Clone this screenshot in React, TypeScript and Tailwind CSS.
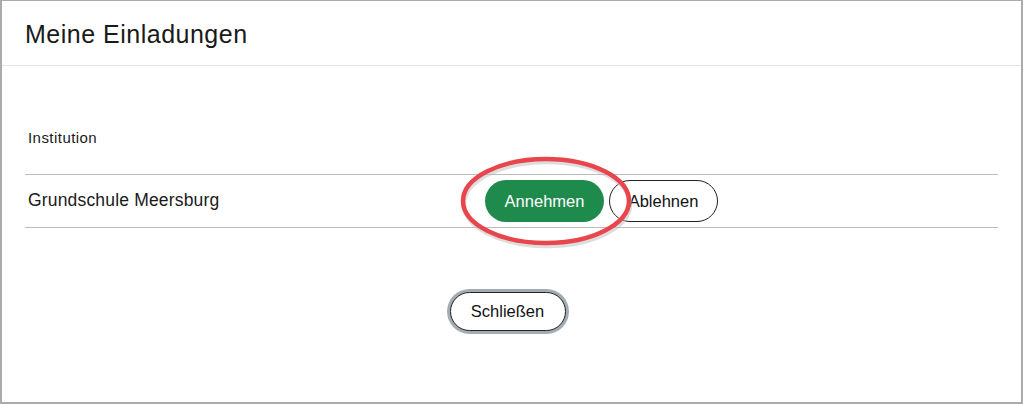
import React from 'react';

const FONT = { fontFamily: '"Liberation Sans", Arial, sans-serif' };

export default function App() {
  return (
    <div className="w-[1024px] h-[404px] bg-white" style={FONT}>
      <div className="relative w-[1023px] h-[404px] border-t border-l-2 border-r-2 border-b-2 border-[#ababab] bg-white text-[#1a1a1a]">
        {/* Header */}
        <div className="h-[65px] flex items-center pl-[23px] border-b border-[#e3e3e3]">
          <h1 className="text-[25px] leading-none tracking-[0.02em] pt-[2px]">Meine Einladungen</h1>
        </div>

        {/* Table */}
        <div className="mx-[23px] w-[973px]">
          <div className="h-[109px] flex items-end pb-[25px] pl-[3px] border-b border-[#bcbcbc]">
            <span className="text-[15px] leading-[22px] tracking-[0.03em]">Institution</span>
          </div>
          <div className="h-[53px] grid grid-cols-[460px_1fr] items-center border-b border-[#bcbcbc]">
            <span className="pl-[3px] text-[17.5px] leading-none tracking-[0.01em]">Grundschule Meersburg</span>
            <div className="flex items-center gap-[5px]">
              <button className="h-[42px] w-[119px] rounded-full bg-[#1e8a4b] text-white text-[16.5px]">
                Annehmen
              </button>
              <button className="h-[42px] w-[109px] rounded-full border border-[#222] bg-white text-[#111] text-[16.5px]">
                Ablehnen
              </button>
            </div>
          </div>
        </div>

        {/* Footer */}
        <div className="flex justify-center pr-[8px] mt-[64px]">
          <button className="h-[39px] w-[116px] rounded-full border border-[#222] bg-white text-[#111] text-[16.5px] shadow-[0_0_0_3px_#a3acb3]">
            Schließen
          </button>
        </div>

        {/* Annotation ellipse */}
        <svg
          className="absolute left-[452px] top-[150px] pointer-events-none"
          width="185"
          height="100"
          viewBox="0 0 185 100"
        >
          <ellipse cx="92" cy="51" rx="83" ry="42" fill="none" stroke="#bbb" strokeWidth="4.5" opacity="0.5" transform="translate(1 2)" />
          <ellipse cx="92" cy="50" rx="83" ry="42" fill="none" stroke="#e8464c" strokeWidth="4.5" />
        </svg>
      </div>
    </div>
  );
}
